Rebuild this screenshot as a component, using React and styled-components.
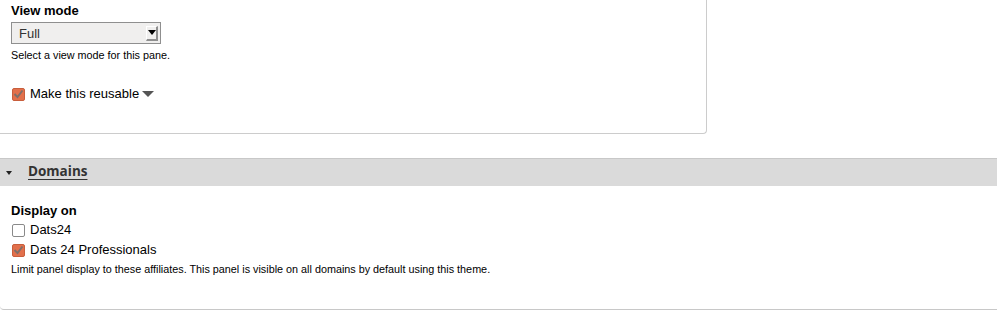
import React from 'react';
import styled, { createGlobalStyle } from 'styled-components';

const GlobalStyle = createGlobalStyle`
  body {
    margin: 0;
    background: #fff;
    font-family: 'Liberation Sans', Arial, sans-serif;
    color: #000;
  }
`;

const Page = styled.div`
  width: 997px;
  height: 312px;
  overflow: hidden;
`;

const Pane = styled.div`
  width: 707px;
  height: 134px;
  box-sizing: border-box;
  border-right: 1px solid #ccc;
  border-bottom: 1px solid #ccc;
  border-bottom-right-radius: 4px;
  padding: 2px 0 0 11px;
`;

const Label = styled.div`
  font-size: 13px;
  font-weight: bold;
  line-height: 17px;
`;

const Select = styled.div`
  display: flex;
  align-items: center;
  justify-content: space-between;
  width: 150px;
  height: 22px;
  box-sizing: border-box;
  margin-top: 3px;
  border: 1px solid #8f8f8f;
  background: #f0efee;
  padding: 0 2px 0 7px;
  font-size: 13px;
  color: #333;
`;

const ArrowButton = styled.span`
  width: 12px;
  height: 15px;
  box-sizing: border-box;
  border-right: 2px solid #8f8f8f;
  border-bottom: 2px solid #8f8f8f;
  border-top: 1px solid #fff;
  border-left: 1px solid #fff;
  display: flex;
  align-items: center;
  justify-content: center;
  &::after {
    content: '';
    border-left: 4px solid transparent;
    border-right: 4px solid transparent;
    border-top: 5px solid #000;
  }
`;

const Help = styled.div`
  font-size: ${(p) => p.$size || 10.8}px;
  line-height: 14px;
  margin-top: ${(p) => p.$top || 4}px;
`;

const CheckRow = styled.label`
  display: flex;
  align-items: center;
  gap: 5px;
  font-size: 13px;
  line-height: 20px;
  margin-top: ${(p) => p.$top || 0}px;
  margin-left: 1px;
`;

const Box = styled.span`
  width: 13px;
  height: 13px;
  box-sizing: border-box;
  border-radius: 2px;
  display: flex;
  align-items: center;
  justify-content: center;
  background: ${(p) => (p.$checked ? '#e2704c' : '#fff')};
  border: 1px solid ${(p) => (p.$checked ? '#c85e3c' : '#8a8a8a')};
`;

const Caret = styled.span`
  display: inline-block;
  margin-left: -2px;
  border-left: 6px solid transparent;
  border-right: 6px solid transparent;
  border-top: 6px solid #555;
`;

const Fieldset = styled.div`
  margin-top: 24px;
  height: 152px;
  box-sizing: border-box;
  border-top: 1px solid #c8c8c8;
  border-bottom: 1px solid #c8c8c8;
  border-bottom-left-radius: 4px;
`;

const Legend = styled.div`
  display: flex;
  align-items: center;
  height: 27px;
  background: #dadada;
  padding-left: 6px;
`;

const Toggle = styled.span`
  width: 0;
  height: 0;
  border-left: 3.5px solid transparent;
  border-right: 3.5px solid transparent;
  border-top: 4px solid #222;
  margin-right: 16px;
`;

const LegendTitle = styled.a`
  font-family: 'Open Sans', 'Noto Sans', sans-serif;
  font-weight: bold;
  font-size: 13.5px;
  color: #333;
  margin-top: -3px;
  text-decoration: underline;
  text-underline-offset: 3px;
`;

const FieldBody = styled.div`
  padding: 16px 0 0 11px;
`;

function Check({ checked }) {
  return (
    <Box $checked={checked}>
      {checked && (
        <svg width="11" height="10" viewBox="0 0 11 10">
          <path d="M1.5 5 L4.5 8 L9.5 1.5" fill="none" stroke="#7f6f6a" strokeWidth="2" />
        </svg>
      )}
    </Box>
  );
}

export default function App() {
  return (
    <Page>
      <GlobalStyle />
      <Pane>
        <Label>View mode</Label>
        <Select>
          <span>Full</span>
          <ArrowButton />
        </Select>
        <Help $size={10.8}>Select a view mode for this pane.</Help>
        <CheckRow $top={22}>
          <Check checked />
          <span>Make this reusable</span>
          <Caret />
        </CheckRow>
      </Pane>
      <Fieldset>
        <Legend>
          <Toggle />
          <LegendTitle>Domains</LegendTitle>
        </Legend>
        <FieldBody>
          <Label>Display on</Label>
          <CheckRow $top={1}>
            <Check />
            <span>Dats24</span>
          </CheckRow>
          <CheckRow>
            <Check checked />
            <span>Dats 24 Professionals</span>
          </CheckRow>
          <Help $top={2}>Limit panel display to these affiliates. This panel is visible on all domains by default using this theme.</Help>
        </FieldBody>
      </Fieldset>
    </Page>
  );
}
